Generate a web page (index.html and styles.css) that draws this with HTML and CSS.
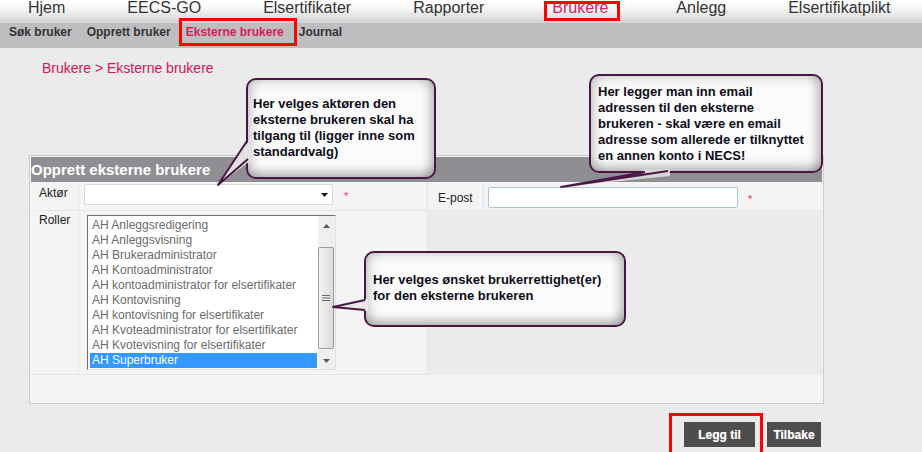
FILE: index.html
```html
<!DOCTYPE html>
<html lang="no">
<head>
<meta charset="utf-8">
<title>Eksterne brukere</title>
<link rel="stylesheet" href="styles.css">
</head>
<body>
<nav class="topnav">
  <a class="topnav-item">Hjem</a>
  <a class="topnav-item">EECS-GO</a>
  <a class="topnav-item">Elsertifikater</a>
  <a class="topnav-item">Rapporter</a>
  <a class="topnav-item is-active">Brukere</a>
  <a class="topnav-item">Anlegg</a>
  <a class="topnav-item">Elsertifikatplikt</a>
</nav>
<nav class="subnav">
  <a class="subnav-item">Søk bruker</a>
  <a class="subnav-item">Opprett bruker</a>
  <a class="subnav-item is-active">Eksterne brukere</a>
  <a class="subnav-item">Journal</a>
</nav>
<main class="content">
  <div class="breadcrumb">Brukere &gt; Eksterne brukere</div>
  <section class="panel">
    <h2 class="panel-title">Opprett eksterne brukere</h2>
    <div class="form-grid">
      <div class="cell label-cell">Aktør</div>
      <div class="cell field-cell">
        <div class="select">
          <svg class="select-arrow" width="7" height="4" viewBox="0 0 7 4"><polygon points="0,0 7,0 3.5,4" fill="#111"/></svg>
        </div>
        <span class="req">*</span>
      </div>
      <div class="cell label-cell2">E-post</div>
      <div class="cell field-cell2">
        <input class="text-input" type="text">
        <span class="req">*</span>
      </div>
      <div class="cell label-cell label-cell-top">Roller</div>
      <div class="cell field-cell field-cell-list">
        <div class="listbox">
          <ul class="listbox-items">
            <li class="listbox-item">AH Anleggsredigering</li>
            <li class="listbox-item">AH Anleggsvisning</li>
            <li class="listbox-item">AH Brukeradministrator</li>
            <li class="listbox-item">AH Kontoadministrator</li>
            <li class="listbox-item">AH kontoadministrator for elsertifikater</li>
            <li class="listbox-item">AH Kontovisning</li>
            <li class="listbox-item">AH kontovisning for elsertifikater</li>
            <li class="listbox-item">AH Kvoteadministrator for elsertifikater</li>
            <li class="listbox-item">AH Kvotevisning for elsertifikater</li>
            <li class="listbox-item is-selected">AH Superbruker</li>
          </ul>
          <div class="scrollbar">
            <div class="scroll-btn scroll-btn-up">
              <svg width="7" height="4" viewBox="0 0 7 4"><polygon points="0,4 7,4 3.5,0" fill="#5a5a5a"/></svg>
            </div>
            <div class="scroll-track">
              <div class="scroll-thumb">
                <svg width="8" height="6" viewBox="0 0 8 6"><path d="M0 0.5H8M0 3H8M0 5.5H8" stroke="#6a6a6a" stroke-width="1"/></svg>
              </div>
            </div>
            <div class="scroll-btn">
              <svg width="7" height="4" viewBox="0 0 7 4"><polygon points="0,0 7,0 3.5,4" fill="#5a5a5a"/></svg>
            </div>
          </div>
        </div>
      </div>
      <div class="cell empty-cell"></div>
    </div>
  </section>
  <div class="actions">
    <button class="btn btn-add" type="button">Legg til</button>
    <button class="btn btn-back" type="button">Tilbake</button>
  </div>
</main>

<div class="highlight hl-brukere"></div>
<div class="highlight hl-eksterne"></div>
<div class="highlight hl-legg"></div>

<div class="callout callout-actor">Her velges aktøren den<br>eksterne brukeren skal ha<br>tilgang til (ligger inne som<br>standardvalg)</div>
<div class="callout callout-email">Her legger man inn email<br>adressen til den eksterne<br>brukeren - skal være en email<br>adresse som allerede er tilknyttet<br>en annen konto i NECS!</div>
<div class="callout callout-roles">Her velges ønsket brukerrettighet(er)<br>for den eksterne brukeren</div>

<svg class="tails" width="922" height="452" viewBox="0 0 922 452">
  <polygon points="250,139 218,185 250,161" fill="#e2e2e2"/>
  <polyline points="247,141 218,185 248,159" fill="none" stroke="#4a1646" stroke-width="2" stroke-linejoin="round"/>
  <polygon points="643,176 561,187 670,176 670,169 643,169" fill="#d6d6d6"/>
  <polyline points="645,172 561,187 668,171" fill="none" stroke="#4a1646" stroke-width="2" stroke-linejoin="round"/>
  <polygon points="368,299 333,307 368,311" fill="#e9e9e9"/>
  <polyline points="365,300 333,307 365,310" fill="none" stroke="#4a1646" stroke-width="2" stroke-linejoin="round"/>
</svg>
</body>
</html>
```
FILE: styles.css
```css
* { box-sizing: border-box; }

html, body {
  margin: 0;
  padding: 0;
  overflow: hidden;
}

body {
  width: 922px;
  height: 452px;
  position: relative;
  background: #ebebeb;
  font-family: "Liberation Sans", Arial, sans-serif;
  color: #222;
}

/* top navigation */
.topnav {
  display: flex;
  align-items: flex-start;
  gap: 62px;
  height: 23px;
  padding-left: 28px;
  background: linear-gradient(#ffffff 0%, #f7f7f7 35%, #d2d2d2 100%);
  font-size: 16px;
  line-height: 16px;
}

.topnav-item {
  color: #333;
  text-decoration: none;
  white-space: nowrap;
}

.topnav-item.is-active {
  color: #d4245e;
  margin: 0 6px;
}

/* sub navigation */
.subnav {
  display: flex;
  gap: 15px;
  height: 25px;
  padding: 2px 0 0 9px;
  background: #bebec0;
  font-size: 12px;
  line-height: 14px;
  font-weight: bold;
}

.subnav-item {
  color: #333;
  white-space: nowrap;
}

.subnav-item.is-active {
  color: #d81b5a;
}

/* content */
.content {
  padding: 12px 0 0 29px;
}

.breadcrumb {
  padding-left: 13px;
  font-size: 14px;
  line-height: 16px;
  color: #d6145a;
}

.panel {
  margin-top: 79px;
  width: 795px;
  border: 1px solid #cdcdcd;
  padding: 1px 1px 28px;
  background: #f4f4f4;
}

.panel-title {
  margin: 0;
  height: 25px;
  line-height: 25px;
  background: #8f8e93;
  color: #fff;
  font-size: 15px;
  font-weight: bold;
  white-space: nowrap;
}

.form-grid {
  display: grid;
  grid-template-columns: 48px 349px 56px 338px;
  grid-template-rows: 29px 164px;
  font-size: 12px;
  line-height: 14px;
}

.cell {
  border-bottom: 1px solid #e6e6e6;
}

.label-cell {
  border-right: 1px solid #e6e6e6;
  padding: 4px 0 0 8px;
  color: #222;
}

.label-cell-top {
  padding-top: 2px;
}

.field-cell {
  display: flex;
  align-items: flex-start;
  border-right: 1px solid #e6e6e6;
  padding: 2px 0 0 5px;
}

.field-cell-list {
  padding: 4px 0 0 8px;
}

.label-cell2 {
  border-right: 1px solid #e6e6e6;
  padding: 9px 0 0 10px;
}

.field-cell2 {
  display: flex;
  align-items: flex-start;
  padding: 5px 0 0 4px;
}

.empty-cell {
  grid-column: span 2;
  background: #ebebeb;
  border-bottom: 0;
}

.select {
  display: flex;
  align-items: center;
  justify-content: flex-end;
  width: 249px;
  height: 21px;
  padding-right: 4px;
  background: #fff;
  border: 1px solid #d9d9d9;
  border-radius: 2px;
}

.select-arrow {
  display: block;
}

.req {
  margin: 6px 0 0 11px;
  color: #f03452;
  font-size: 11px;
  line-height: 13px;
}

.field-cell2 .req {
  margin-left: 10px;
}

.text-input {
  width: 250px;
  height: 21px;
  margin: 0;
  padding: 0 3px;
  border: 1px solid #a9c6de;
  border-radius: 2px;
  background: #fff;
  font: inherit;
}

/* listbox */
.listbox {
  display: flex;
  width: 249px;
  height: 155px;
  border: 1px solid;
  border-color: #6e6e6e #e2e2e2 #e2e2e2 #6e6e6e;
  background: #fff;
}

.listbox-items {
  width: 230px;
  margin: 0;
  padding: 2px 1px 0 2px;
  list-style: none;
}

.listbox-item {
  height: 15px;
  padding-left: 2px;
  line-height: 15px;
  color: #6b6b6b;
  white-space: nowrap;
}

.listbox-item.is-selected {
  background: #3399ff;
  color: #fff;
}

.scrollbar {
  display: flex;
  flex-direction: column;
  width: 17px;
  background: #efefef;
  padding-right: 1px;
}

.scroll-btn {
  display: flex;
  align-items: center;
  justify-content: center;
  height: 17px;
}

.scroll-btn svg {
  display: block;
}

.scroll-btn-up {
  padding-top: 3px;
}

.scroll-track {
  flex: 1;
  padding-top: 14px;
}

.scroll-thumb {
  display: flex;
  align-items: center;
  justify-content: center;
  height: 102px;
  border: 1px solid #9c9c9c;
  border-radius: 2px;
  background: linear-gradient(90deg, #f3f3f3, #dadada);
}

/* actions */
.actions {
  display: flex;
  justify-content: flex-end;
  gap: 12px;
  width: 795px;
  margin-top: 18px;
  padding-right: 3px;
}

.btn {
  height: 25px;
  padding: 0;
  border: 0;
  background: #4d4d4d;
  color: #fff;
  font-family: "Liberation Sans", Arial, sans-serif;
  font-size: 12px;
  font-weight: bold;
  text-shadow: 0 0 1px rgba(255, 255, 255, 0.5);
}

.btn-add { width: 71px; }
.btn-back { width: 54px; }

/* annotation overlays */
.highlight {
  position: absolute;
  border: 3px solid #ff0000;
}

.hl-brukere { left: 544px; top: 1px; width: 76px; height: 20px; }
.hl-eksterne { left: 179px; top: 18px; width: 118px; height: 28px; }
.hl-legg { left: 669px; top: 413px; width: 94px; height: 44px; }

.callout {
  position: absolute;
  border: 2px solid #4a1646;
  border-radius: 10px;
  background: #fbfbfb;
  box-shadow:
    inset 0 -9px 8px -3px rgba(0, 0, 0, 0.22),
    inset -9px 0 8px -3px rgba(0, 0, 0, 0.18),
    inset 9px 0 8px -3px rgba(0, 0, 0, 0.12),
    inset 0 9px 8px -3px rgba(0, 0, 0, 0.07);
  font-family: "Liberation Sans", Arial, sans-serif;
  font-size: 13px;
  font-weight: bold;
  line-height: 16px;
  color: #0d0d18;
  white-space: nowrap;
}

.callout-actor { left: 246px; top: 78px; width: 190px; height: 101px; padding: 16px 0 0 5px; }
.callout-email { left: 589px; top: 74px; width: 234px; height: 99px; padding: 8px 0 0 7px; }
.callout-roles { left: 364px; top: 251px; width: 262px; height: 76px; padding: 19px 0 0 7px; }

.tails {
  position: absolute;
  left: 0;
  top: 0;
  pointer-events: none;
}
```
